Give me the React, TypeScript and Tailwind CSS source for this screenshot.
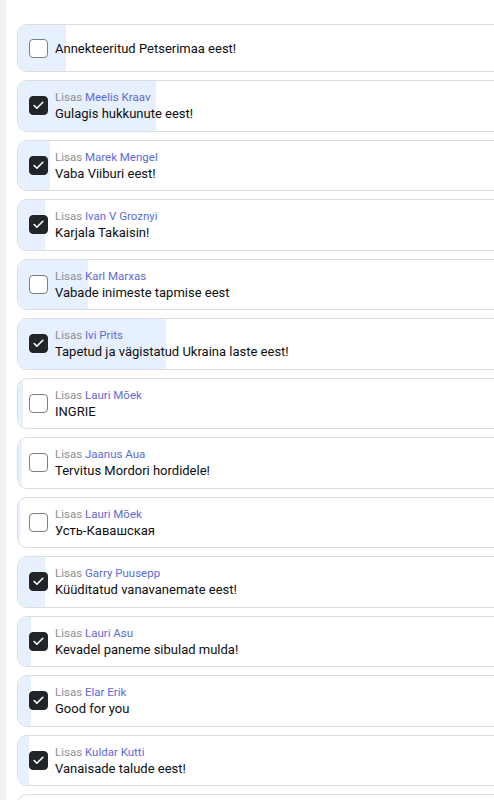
import { Check } from 'lucide-react';

type Item = {
  text: string;
  author?: string;
  checked: boolean;
  bar: number;
};

const items: Item[] = [
  { text: 'Annekteeritud Petserimaa eest!', checked: false, bar: 48 },
  { text: 'Gulagis hukkunute eest!', author: 'Meelis Kraav', checked: true, bar: 138 },
  { text: 'Vaba Viiburi eest!', author: 'Marek Mengel', checked: true, bar: 32 },
  { text: 'Karjala Takaisin!', author: 'Ivan V Groznyi', checked: true, bar: 27 },
  { text: 'Vabade inimeste tapmise eest', author: 'Karl Marxas', checked: false, bar: 70 },
  { text: 'Tapetud ja vägistatud Ukraina laste eest!', author: 'Ivi Prits', checked: true, bar: 148 },
  { text: 'INGRIE', author: 'Lauri Mõek', checked: false, bar: 5 },
  { text: 'Tervitus Mordori hordidele!', author: 'Jaanus Aua', checked: false, bar: 4 },
  { text: 'Усть-Кавашская', author: 'Lauri Mõek', checked: false, bar: 2 },
  { text: 'Küüditatud vanavanemate eest!', author: 'Garry Puusepp', checked: true, bar: 27 },
  { text: 'Kevadel paneme sibulad mulda!', author: 'Lauri Asu', checked: true, bar: 13 },
  { text: 'Good for you', author: 'Elar Erik', checked: true, bar: 13 },
  { text: 'Vanaisade talude eest!', author: 'Kuldar Kutti', checked: true, bar: 11 },
];

function Row({ item }: { item: Item }) {
  return (
    <div
      className={
        'relative mb-2 flex w-[520px] items-center overflow-hidden rounded-[10px] border border-[#dcdde0] bg-white ' +
        (item.author === undefined ? 'h-[48px]' : 'h-[51.5px]')
      }
    >
      <div className="absolute inset-y-0 left-0 bg-[#e7f0fe]" style={{ width: item.bar }} />
      <div className="relative flex items-center gap-[7px] pl-[11px]">
        <div
          className={
            'flex h-[19px] w-[19px] items-center justify-center rounded-[4px] border ' +
            (item.checked ? 'border-[#212529] bg-[#212529]' : 'border-[#7b7f86] bg-white')
          }
        >
          {item.checked && <Check className="h-[13px] w-[13px] text-white" strokeWidth={3} />}
        </div>
        <div className="flex flex-col pt-[1px]">
          {item.author !== undefined && (
            <div className="text-[11.5px] leading-[16px] text-[#8a8f98]">
              Lisas <span className="text-[#5d6bd8]">{item.author}</span>
            </div>
          )}
          <div className="text-[13px] leading-[18px] text-[#0d0f11]">{item.text}</div>
        </div>
      </div>
    </div>
  );
}

export default function App() {
  return (
    <div
      className="flex h-[800px] w-[494px] overflow-hidden bg-white"
      style={{ fontFamily: "Roboto, 'Noto Sans', sans-serif" }}
    >
      <div className="w-[6px] shrink-0 bg-[#f1f2f4]" />
      <div className="pl-[11px] pt-[24px]">
        {items.map((item, i) => (
          <Row key={i} item={item} />
        ))}
        <div className="h-[51.5px] w-[520px] rounded-[10px] border border-[#dcdde0] bg-white" />
      </div>
    </div>
  );
}
